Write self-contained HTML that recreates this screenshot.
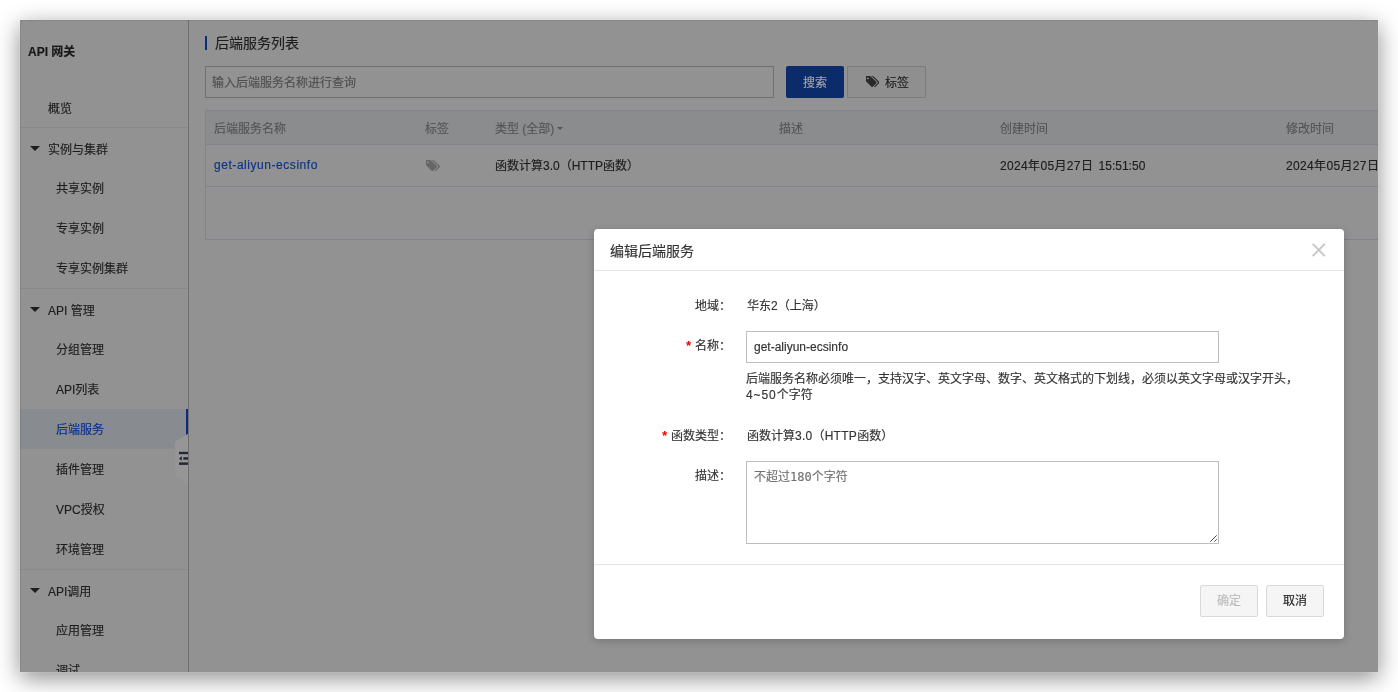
<!DOCTYPE html>
<html lang="zh-CN">
<head>
<meta charset="utf-8">
<title>API 网关</title>
<style>
*{box-sizing:border-box;margin:0;padding:0}
html,body{width:1398px;height:692px;overflow:hidden;background:#fff}
body{font-family:"Liberation Sans","Noto Sans CJK SC",sans-serif;font-size:12px;color:#1c1c1c;position:relative;-webkit-text-stroke:.15px}
#win{position:absolute;left:20px;top:20px;width:1358px;height:652px;background:#929292;overflow:hidden;will-change:transform}
#shadow{position:absolute;left:20px;top:20px;width:1358px;height:652px;box-shadow:0 0 0 1px rgba(255,255,255,.12),0 6px 22px rgba(0,0,0,.46)}
#edge{position:absolute;left:0;top:0;width:1358px;height:652px;box-shadow:inset 1px 1px 0 rgba(0,0,0,.075);pointer-events:none}
.abs{position:absolute;white-space:nowrap}
/* sidebar */
#side{position:absolute;left:0;top:0;width:169px;height:652px;background:#929292;border-right:1px solid #6e6e6e}
#side .t{position:absolute;left:8px;top:22px;font-weight:bold;font-size:12px;line-height:20px;color:#181818}
.it{position:absolute;left:0;width:168px;height:40px;line-height:40px;font-size:12px;color:#1d1d1d;white-space:nowrap}
.it.l1{padding-left:28px;padding-top:2px}
.it.l2{padding-left:36px;padding-top:1px}
.it.sel{background:#888c90;color:#08318c}
.it.sel:after{content:"";position:absolute;right:0;top:0;width:2px;height:40px;background:#0a2d7c}
#hd{position:absolute;left:155px;top:413px}
.tri{position:absolute;left:10px;top:18px;width:0;height:0;border-left:5px solid transparent;border-right:5px solid transparent;border-top:5px solid #1d1d1d}
.dv{position:absolute;left:0;width:168px;height:1px;background:#8a8a8a}

/* main */
#main{position:absolute;left:169px;top:0;width:1189px;height:652px;overflow:hidden}
#ttl{position:absolute;left:16px;top:16px;width:2px;height:14px;background:#0a2d7c}
#ttlt{position:absolute;left:26px;top:13px;font-size:14px;line-height:20px;color:#1d1d1d;white-space:nowrap}
#q{position:absolute;left:16px;top:46px;width:569px;height:32px;border:1px solid #6f6f6f;padding-left:6px;padding-top:1px;line-height:30px;font-size:12px;color:#4f4f4f;white-space:nowrap}
#bs{position:absolute;left:597px;top:46px;width:58px;height:32px;background:#0c2b6b;border-radius:2px;color:#a6a6a6;text-align:center;line-height:34px;font-size:12px}
#bt{position:absolute;left:658px;top:46px;width:79px;height:32px;border:1px solid #7b7b7b;background:#8f8f8f;border-radius:1px;color:#1d1d1d;line-height:32px;font-size:12px;white-space:nowrap}
#bt span{position:absolute;left:37px;top:0}
#bt svg{position:absolute;left:17.8px;top:9px}
#tb{position:absolute;left:16px;top:90px;width:1300px;height:130px;border:1px solid #81848b}
#th{position:absolute;left:0;top:0;width:1298px;height:34px;background:#8b8c8e;border-bottom:1px solid #81848b}
#tr{position:absolute;left:0;top:34px;width:1298px;height:42px;border-bottom:1px solid #81848b}
#th div{position:absolute;top:2px;line-height:33px;color:#555;font-size:12px;white-space:nowrap}
#tr div{position:absolute;top:1px;line-height:41px;color:#1d1d1d;font-size:12px;white-space:nowrap}
#tr a{color:#0b3489;text-decoration:none;letter-spacing:.55px;position:relative;top:-1px}
.car{display:inline-block;width:0;height:0;border-left:3.5px solid transparent;border-right:3.5px solid transparent;border-top:3.5px solid #555;vertical-align:middle;margin-left:3px;position:relative;top:-1px}

/* modal */
#md{position:absolute;left:574px;top:209px;width:750px;height:410px;background:#fff;border-radius:4px;box-shadow:0 2px 8px rgba(0,0,0,.2)}
#mh{position:absolute;left:0;top:0;width:750px;height:42px;border-bottom:1px solid #e5e5e5}
#mh .tt{position:absolute;left:16px;top:12px;font-size:14px;line-height:20px;color:#333;white-space:nowrap}
#mh svg{position:absolute;left:717px;top:13px}
.lb{position:absolute;left:0;width:137px;text-align:right;font-size:12px;line-height:20px;color:#333;white-space:nowrap}
.lb b{color:#f00;font-weight:bold;font-family:"Liberation Sans",sans-serif;margin-right:4px}
.vl{position:absolute;left:152px;font-size:12px;line-height:20px;color:#333;white-space:nowrap}
#in1{position:absolute;left:152px;top:102px;width:473px;height:32px;border:1px solid #bfbfbf;padding-left:7px;line-height:30px;font-size:12px;color:#333;font-family:"Liberation Sans",sans-serif}
#hp{position:absolute;left:152px;top:142px;width:560px;font-size:12px;line-height:16px;color:#333}
#ta{position:absolute;left:152px;top:232px;width:473px;height:83px;border:1px solid #bfbfbf;padding:7px 0 0 7px;font-size:12px;line-height:16px;color:#707070;font-family:"DejaVu Sans Mono","Noto Sans CJK SC",monospace}
#ta svg{position:absolute;right:1px;bottom:1px}
#mf{position:absolute;left:0;top:335px;width:750px;height:75px;border-top:1px solid #e5e5e5}
.btn{position:absolute;top:20px;width:58px;height:32px;border:1px solid #d9d9d9;background:#f5f5f5;border-radius:2px;text-align:center;line-height:30px;font-size:12px;color:#222}
.dt{letter-spacing:.35px}.tm{margin-left:2px}
</style>
</head>
<body>
<div id="shadow"></div>
<div id="win">
  <div id="side">
    <div class="t">API 网关</div>
    <div class="it l1" style="top:67px">概览</div>
    <div class="dv" style="top:107px"></div>
    <div class="it l1" style="top:108px"><i class="tri"></i>实例与集群</div>
    <div class="it l2" style="top:148px">共享实例</div>
    <div class="it l2" style="top:188px">专享实例</div>
    <div class="it l2" style="top:228px">专享实例集群</div>
    <div class="dv" style="top:268px"></div>
    <div class="it l1" style="top:269px"><i class="tri"></i>API 管理</div>
    <div class="it l2" style="top:309px">分组管理</div>
    <div class="it l2" style="top:349px">API列表</div>
    <div class="it l2 sel" style="top:389px">后端服务</div>
    <div class="it l2" style="top:429px">插件管理</div>
    <div class="it l2" style="top:469px">VPC授权</div>
    <div class="it l2" style="top:509px">环境管理</div>
    <div class="dv" style="top:549px"></div>
    <div class="it l1" style="top:550px"><i class="tri"></i>API调用</div>
    <div class="it l2" style="top:590px">应用管理</div>
    <div class="it l2" style="top:630px">调试</div>
    <svg id="hd" width="13" height="53" viewBox="0 0 13 53"><polygon points="13,0.7 0,8.7 0,41.9 13,50.8" fill="#969696"/><g fill="#202a3b"><rect x="4" y="18.8" width="9" height="2.4"/><rect x="8.3" y="24.2" width="4.7" height="2.5"/><polygon points="4,25.5 6.8,23.2 6.8,27.8"/><rect x="4" y="29.4" width="9" height="2.5"/></g></svg>
  </div>

  <div id="main">
    <div id="ttl"></div><div id="ttlt">后端服务列表</div>
    <div id="q">输入后端服务名称进行查询</div>
    <div id="bs">搜索</div>
    <div id="bt"><svg width="13.5" height="11" viewBox="0 128 1836 1516" preserveAspectRatio="none"><path fill="#2a2a2a" fill-rule="evenodd" d="M384 448q0 53-37.500 90.500t-90.500 37.500-90.500-37.500-37.500-90.500 37.500-90.500 90.500-37.500 90.500 37.500 37.500 90.500zm1067 576q0 53-37 90l-491 492q-39 37-91 37-53 0-90-37l-715-716q-38-37-64.500-101t-26.500-117v-416q0-52 38-90t90-38h416q53 0 117 26.500t102 64.500l715 714q37 39 37 91zm384 0q0 53-37 90l-491 492q-39 37-91 37-36 0-59-14t-53-45l470-470q37-37 37-90 0-52-37-91l-715-714q-38-38-102-64.500t-117-26.500h224q53 0 117 26.500t102 64.500l715 714q37 39 37 91z"/></svg><span>标签</span></div>
    <div id="tb">
      <div id="th">
        <div style="left:8px">后端服务名称</div>
        <div style="left:219px">标签</div>
        <div style="left:289px">类型 (全部)<i class="car"></i></div>
        <div style="left:573px">描述</div>
        <div style="left:794px">创建时间</div>
        <div style="left:1080px">修改时间</div>
      </div>
      <div id="tr">
        <div style="left:8px"><a>get-aliyun-ecsinfo</a></div>
        <div style="left:219px"><svg width="14" height="11" viewBox="0 128 1836 1516" preserveAspectRatio="none" style="position:absolute;left:1px;top:14px"><path fill="#666" fill-rule="evenodd" d="M384 448q0 53-37.500 90.500t-90.500 37.500-90.500-37.500-37.500-90.500 37.500-90.500 90.500-37.500 90.500 37.500 37.500 90.500zm1067 576q0 53-37 90l-491 492q-39 37-91 37-53 0-90-37l-715-716q-38-37-64.500-101t-26.500-117v-416q0-52 38-90t90-38h416q53 0 117 26.500t102 64.500l715 714q37 39 37 91zm384 0q0 53-37 90l-491 492q-39 37-91 37-36 0-59-14t-53-45l470-470q37-37 37-90 0-52-37-91l-715-714q-38-38-102-64.500t-117-26.500h224q53 0 117 26.500t102 64.500l715 714q37 39 37 91z"/></svg></div>
        <div style="left:289px">函数计算3.0（HTTP函数）</div>
        <div style="left:794px"><span class="dt">2024年05月27日</span> <span class="tm">15:51:50</span></div>
        <div style="left:1080px"><span class="dt">2024年05月27日</span> <span class="tm">15:51:50</span></div>
      </div>
    </div>
  </div>

  <div id="md">
    <div id="mh"><div class="tt">编辑后端服务</div>
      <svg width="16" height="16" viewBox="0 0 16 16"><path d="M1.7 1.8 L13.8 14.1 M13.8 1.8 L1.7 14.1" stroke="#c6c6c6" stroke-width="1.9" fill="none"/></svg>
    </div>
    <div class="lb" style="top:67px">地域：</div><div class="vl" style="top:67px;left:153px">华东2（上海）</div>
    <div class="lb" style="top:107px"><b>*</b>名称：</div><div id="in1">get-aliyun-ecsinfo</div>
    <div id="hp">后端服务名称必须唯一，支持汉字、英文字母、数字、英文格式的下划线，必须以英文字母或汉字开头，<br><span style="letter-spacing:.9px">4~50</span>个字符</div>
    <div class="lb" style="top:197px"><b>*</b>函数类型：</div><div class="vl" style="top:197px;left:153px">函数计算<span style="letter-spacing:.3px">3.0</span>（<span style="letter-spacing:.3px">HTTP</span>函数）</div>
    <div class="lb" style="top:237px">描述：</div>
    <div id="ta">不超过180个字符<svg width="10" height="10" viewBox="0 0 10 10"><path d="M9.7 3.3 L3.3 9.7 M9.7 7.3 L7.3 9.7" stroke="#4a4a4a" stroke-width="1" fill="none"/></svg></div>
    <div id="mf"><div class="btn" style="left:606px;color:#bbb">确定</div><div class="btn" style="left:672px">取消</div></div>
  </div>
  <div id="edge"></div>
</div>
</body>
</html>
